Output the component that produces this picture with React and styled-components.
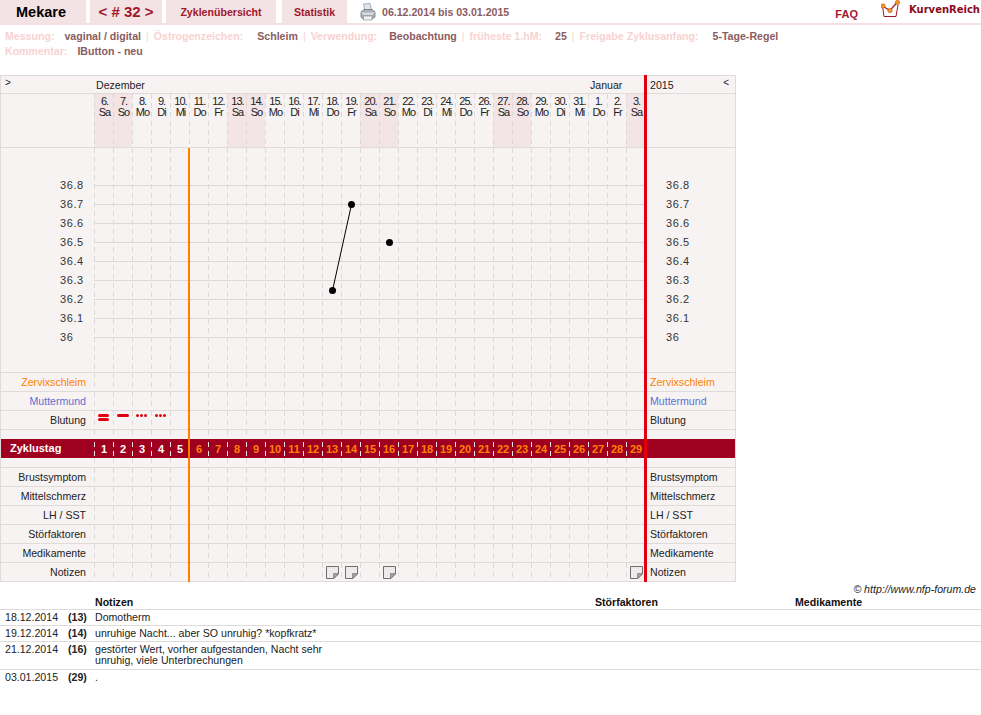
import React from "react";
import styled, { createGlobalStyle, css } from "styled-components";

const GlobalStyle = createGlobalStyle`
  html, body {
    margin: 0;
    padding: 0;
    background: #fff;
    font-family: "Liberation Sans", Arial, sans-serif;
    font-size: 10.6px;
    color: #222;
  }
`;

const TopBar = styled.div`
  display: flex;
  align-items: stretch;
  height: 23px;
  border-bottom: 2px solid #f3e0e3;
`;

const Tab = styled.div`
  display: flex;
  align-items: center;
  justify-content: center;
  width: ${({ $width }) => $width}px;
  margin-right: ${({ $gap }) => $gap}px;
  background: #f3e3e5;
  color: #a0182c;
  font-weight: bold;
`;

const TitleTab = styled(Tab)`
  box-sizing: border-box;
  padding-right: 4px;
  color: #000;
  font-size: 14.5px;
`;

const CycleTab = styled(Tab)`
  font-size: 15px;
`;

const PrintBox = styled.div`
  display: flex;
  align-items: center;
  gap: 6px;
  margin-left: 13px;
  color: #8a5c62;
  font-weight: bold;
`;

const Faq = styled.a`
  margin-left: auto;
  align-self: flex-end;
  margin-right: 23px;
  margin-bottom: 2px;
  color: #a0182c;
  font-size: 11px;
  font-weight: bold;
  line-height: 13px;
`;

const Logo = styled.div`
  display: flex;
  align-items: flex-start;
  gap: 8px;
  margin-right: 1px;
  color: #8c0a20;
  font-family: "DejaVu Sans", sans-serif;
  font-size: 10px;
  font-weight: bold;
  line-height: 20px;
`;

const Info = styled.div`
  box-sizing: border-box;
  height: 50px;
  padding: 4px 0 0 5px;
  font-weight: bold;
  line-height: 15px;
`;

const InfoLine = styled.div`
  display: flex;
  white-space: nowrap;
`;

const InfoLabel = styled.span`
  color: #f8d2d2;
  margin-right: ${({ $gap }) => $gap}px;
`;

const InfoValue = styled.span`
  color: #8a5c62;
`;

const InfoSep = styled.span`
  color: #f8d2d2;
  font-weight: normal;
  margin: 0 5px;
`;

const Chart = styled.div`
  position: relative;
  box-sizing: border-box;
  width: 736px;
  background: #f8f3f3;
  border: 1px solid #dfdbdb;
  border-bottom: none;
`;

const OrangeLine = styled.div`
  position: absolute;
  top: 72px;
  bottom: 0;
  left: 187px;
  width: 2px;
  background: #ff8000;
`;

const RedLine = styled.div`
  position: absolute;
  top: -1px;
  bottom: 0;
  left: 643px;
  width: 3px;
  background: #e2000f;
`;

const Row = styled.div`
  display: grid;
  grid-template-columns: 93px repeat(29, 19px) 1fr;
  height: ${({ $height }) => $height || 19}px;
  box-sizing: border-box;
  border-bottom: ${({ $plain }) => ($plain ? "none" : "1px solid #dfdbdb")};
`;

const MonthRow = styled(Row)`
  line-height: 18px;
`;

const Toggle = styled.span`
  padding-left: 4px;
  font-size: 10px;
  line-height: 14px;
`;

const Month = styled.div`
  grid-column: span ${({ $span }) => $span};
  padding-left: 2px;
`;

const YearCell = styled.div`
  display: flex;
  justify-content: space-between;
  padding: 0 6px 0 5px;
`;

const dashes = css`
  background-image: repeating-linear-gradient(
    to bottom,
    ${({ $dash }) => $dash || "#dcd9d9"} 0 5px,
    transparent 5px 9px
  );
  background-size: 1px 100%;
  background-repeat: no-repeat;
`;

const DayCell = styled.div`
  ${dashes}
  display: flex;
  align-items: center;
  justify-content: center;
  padding-left: 1px;
`;

const HeadCell = styled(DayCell)`
  flex-direction: column;
  justify-content: flex-start;
  padding: 2px 0 0 2px;
  background-color: ${({ $weekend }) => ($weekend ? "#f3e4e6" : "transparent")};
  font-size: 11px;
  line-height: 11px;
  letter-spacing: -1px;
`;

const MarkCell = styled(DayCell)`
  align-items: flex-start;
  padding: 3px 0 0;
`;

const RowLabel = styled.div`
  padding-right: 8px;
  text-align: right;
  line-height: 18px;
  color: ${({ $color }) => $color || "#222"};
`;

const RowEnd = styled.div`
  padding-left: 5px;
  line-height: 18px;
  color: ${({ $color }) => $color || "#222"};
`;

const Band = styled(Row)`
  background: #a00020;
  color: #fff;
  font-weight: bold;
`;

const BandLabel = styled.div`
  padding-left: 9px;
  font-size: 11px;
  line-height: 19px;
`;

const BandCell = styled(DayCell)`
  background-position: 0 3px;
  font-size: 11px;
  font-weight: bold;
  color: ${({ $early }) => ($early ? "#fff" : "#ff8000")};
`;

const Plot = styled.div`
  display: flex;
  height: 225px;
  box-sizing: border-box;
  border-bottom: 1px solid #dfdbdb;
`;

const Axis = styled.div`
  flex: ${({ $end }) => ($end ? "1" : "0 0 93px")};
  box-sizing: border-box;
  padding: 28px 0 0 ${({ $end }) => ($end ? 21 : 59)}px;
`;

const AxisValue = styled.div`
  height: 19px;
  font-size: 11px;
  letter-spacing: 0.6px;
  line-height: 19px;
  color: #333;
`;

const PlotArea = styled.svg`
  display: block;
  flex: 0 0 551px;
`;

const Copyright = styled.div`
  height: 13px;
  margin-top: 1px;
  padding-right: 5px;
  text-align: right;
  font-style: italic;
  line-height: 13px;
`;

const NoteRow = styled.div`
  display: grid;
  grid-template-columns: 63px 27px 500px 200px 1fr;
  padding: 2px 0 ${({ $tall }) => ($tall ? 3 : 2)}px 5px;
  border-bottom: 1px solid #dfdbdb;
  line-height: 11px;

  &:last-child {
    border-bottom: none;
  }
`;

const NoteHead = styled(NoteRow)`
  padding-top: 0;
  padding-bottom: 0;
  line-height: 13px;
  font-weight: bold;
  color: #111;
`;

const CycleDay = styled.span`
  font-weight: bold;
`;

const NoteText = styled.div`
  max-width: 240px;
`;

const dayNames = ["Sa", "So", "Mo", "Di", "Mi", "Do", "Fr"];
const dates = [...Array.from({ length: 26 }, (_, i) => i + 6), 1, 2, 3];
const days = dates.map((date, i) => ({
  date,
  name: dayNames[i % 7],
  weekend: i % 7 < 2,
  cycle: i + 1,
}));

const temps = ["36.8", "36.7", "36.6", "36.5", "36.4", "36.3", "36.2", "36.1", "36"];

const topRows = [
  { label: "Zervixschleim", color: "#ff8000" },
  { label: "Muttermund", color: "#5a70d2" },
];

const bottomRows = ["Brustsymptom", "Mittelschmerz", "LH / SST", "Störfaktoren", "Medikamente"];

const noteDays = [13, 14, 16, 29];

const notes = [
  { date: "18.12.2014", day: 13, text: "Domotherm" },
  { date: "19.12.2014", day: 14, text: "unruhige Nacht... aber SO unruhig? *kopfkratz*" },
  { date: "21.12.2014", day: 16, tall: true, text: "gestörter Wert, vorher aufgestanden, Nacht sehr unruhig, viele Unterbrechungen" },
  { date: "03.01.2015", day: 29, text: "." },
];

const bleeding = [3, 2, 1, 1];

const PrinterIcon = () => (
  <svg width="16" height="18" viewBox="0 0 16 18">
    <path d="M3.5 1 L10 0.5 L11.5 7 L5 8 Z" fill="#dfe6ee" stroke="#8d97a3" strokeWidth="0.8" />
    <path d="M1 9 L4 6.5 H12 L15 9 V14 L12 16 H3 L1 14 Z" fill="#aab0b8" stroke="#6f757d" strokeWidth="0.8" />
    <path d="M1 9.5 H15 L12 12 H3 Z" fill="#d8dcdf" />
    <path d="M3.5 13 H12 V17 H3.5 Z" fill="#eef0f2" stroke="#80868d" strokeWidth="0.6" />
  </svg>
);

const LogoIcon = () => (
  <svg width="20" height="18" viewBox="0 0 20 18">
    <path d="M1.5 6 L3 16.5 H15 L17 5" fill="#fff" stroke="#a0182c" strokeWidth="1" />
    <path d="M1.5 6 L9 10.5 L16 2.5" fill="none" stroke="#a0182c" strokeWidth="1.2" />
    <circle cx="2" cy="6" r="2.2" fill="#f59a1c" stroke="#b5401a" strokeWidth="0.5" />
    <circle cx="9" cy="10.5" r="2.2" fill="#f59a1c" stroke="#b5401a" strokeWidth="0.5" />
    <circle cx="16.5" cy="2.5" r="2.2" fill="#f59a1c" stroke="#b5401a" strokeWidth="0.5" />
  </svg>
);

const NoteIcon = () => (
  <svg width="13" height="13" viewBox="0 0 13 13">
    <path d="M0.5 0.5 H12.5 V8 L8 12.5 H0.5 Z" fill="#eceaea" stroke="#6e6e6e" />
    <path d="M12.5 7.5 H7.5 V12.5 Z" fill="#a0a0a0" stroke="#6e6e6e" strokeWidth="0.6" />
  </svg>
);

const BleedMark = ({ level }) => (
  <svg width="18" height="8" viewBox="0 0 18 8">
    {level === 3 && (
      <>
        <rect x="3" y="0" width="11" height="3" rx="1.5" fill="#e2000f" />
        <rect x="3" y="4" width="11" height="3" rx="1.5" fill="#e2000f" />
      </>
    )}
    {level === 2 && <rect x="3" y="0" width="12" height="3" rx="1.5" fill="#e2000f" />}
    {level === 1 &&
      [4, 8, 12].map((x) => <circle key={x} cx={x + 0.5} cy="1.5" r="1.5" fill="#e2000f" />)}
  </svg>
);

const Curve = () => (
  <PlotArea width="551" height="224" viewBox="0 0 551 224">
    {days.map((d, i) => (
      <line key={d.cycle} x1={i * 19 + 0.5} x2={i * 19 + 0.5} y1="0" y2="224" stroke="#dcd9d9" strokeDasharray="5 4" />
    ))}
    {temps.map((t, i) => (
      <line key={t} x1="0" x2="551" y1={37.5 + i * 19} y2={37.5 + i * 19} stroke="#dcd9d9" />
    ))}
    <line x1="238.5" y1="142.5" x2="257.5" y2="56.5" stroke="#000" />
    <circle cx="238.5" cy="142.5" r="3.5" fill="#000" />
    <circle cx="257.5" cy="56.5" r="3.5" fill="#000" />
    <circle cx="295.5" cy="94.5" r="3.5" fill="#000" />
  </PlotArea>
);

const EmptyCells = () => days.map((d) => <DayCell key={d.cycle} />);

const App = () => (
  <>
    <GlobalStyle />
    <TopBar>
      <TitleTab $width={86} $gap={4}>Mekare</TitleTab>
      <CycleTab $width={72} $gap={4}>&lt; # 32 &gt;</CycleTab>
      <Tab $width={110} $gap={6}>Zyklenübersicht</Tab>
      <Tab $width={65} $gap={0}>Statistik</Tab>
      <PrintBox>
        <PrinterIcon />
        <span>06.12.2014 bis 03.01.2015</span>
      </PrintBox>
      <Faq>FAQ</Faq>
      <Logo>
        <LogoIcon />
        <span>KurvenReich</span>
      </Logo>
    </TopBar>

    <Info>
      <InfoLine>
        <InfoLabel $gap={10}>Messung:</InfoLabel>
        <InfoValue>vaginal / digital</InfoValue>
        <InfoSep>|</InfoSep>
        <InfoLabel $gap={14}>Östrogenzeichen:</InfoLabel>
        <InfoValue>Schleim</InfoValue>
        <InfoSep>|</InfoSep>
        <InfoLabel $gap={12}>Verwendung:</InfoLabel>
        <InfoValue>Beobachtung</InfoValue>
        <InfoSep>|</InfoSep>
        <InfoLabel $gap={13}>früheste 1.hM:</InfoLabel>
        <InfoValue>25</InfoValue>
        <InfoSep>|</InfoSep>
        <InfoLabel $gap={14}>Freigabe Zyklusanfang:</InfoLabel>
        <InfoValue>5-Tage-Regel</InfoValue>
      </InfoLine>
      <InfoLine>
        <InfoLabel $gap={10}>Kommentar:</InfoLabel>
        <InfoValue>IButton - neu</InfoValue>
      </InfoLine>
    </Info>

    <Chart>
      <MonthRow $height={18}>
        <Toggle>&gt;</Toggle>
        <Month $span={26}>Dezember</Month>
        <Month $span={3}>Januar</Month>
        <YearCell>
          <span>2015</span>
          <Toggle>&lt;</Toggle>
        </YearCell>
      </MonthRow>

      <Row $height={54}>
        <div />
        {days.map((d) => (
          <HeadCell key={d.cycle} $weekend={d.weekend}>
            <span>{d.date}.</span>
            <span>{d.name}</span>
          </HeadCell>
        ))}
        <div />
      </Row>

      <Plot>
        <Axis>
          {temps.map((t) => <AxisValue key={t}>{t}</AxisValue>)}
        </Axis>
        <Curve />
        <Axis $end>
          {temps.map((t) => <AxisValue key={t}>{t}</AxisValue>)}
        </Axis>
      </Plot>

      {topRows.map((r) => (
        <Row key={r.label}>
          <RowLabel $color={r.color}>{r.label}</RowLabel>
          <EmptyCells />
          <RowEnd $color={r.color}>{r.label}</RowEnd>
        </Row>
      ))}

      <Row>
        <RowLabel>Blutung</RowLabel>
        {days.map((d, i) => (
          <MarkCell key={d.cycle}>
            {bleeding[i] && <BleedMark level={bleeding[i]} />}
          </MarkCell>
        ))}
        <RowEnd>Blutung</RowEnd>
      </Row>

      <Row $height={9} $plain>
        <div />
        <EmptyCells />
        <div />
      </Row>

      <Band $plain>
        <BandLabel>Zyklustag</BandLabel>
        {days.map((d) => (
          <BandCell key={d.cycle} $dash="#f4e6e6" $early={d.cycle < 6}>{d.cycle}</BandCell>
        ))}
        <div />
      </Band>

      <Row $height={10}>
        <div />
        <EmptyCells />
        <div />
      </Row>

      {bottomRows.map((label) => (
        <Row key={label}>
          <RowLabel>{label}</RowLabel>
          <EmptyCells />
          <RowEnd>{label}</RowEnd>
        </Row>
      ))}

      <Row>
        <RowLabel>Notizen</RowLabel>
        {days.map((d) => (
          <DayCell key={d.cycle}>
            {noteDays.includes(d.cycle) && <NoteIcon />}
          </DayCell>
        ))}
        <RowEnd>Notizen</RowEnd>
      </Row>

      <OrangeLine />
      <RedLine />
    </Chart>

    <Copyright>© http://www.nfp-forum.de</Copyright>

    <NoteHead>
      <span />
      <span />
      <span>Notizen</span>
      <span>Störfaktoren</span>
      <span>Medikamente</span>
    </NoteHead>
    {notes.map((n) => (
      <NoteRow key={n.date} $tall={n.tall}>
        <span>{n.date}</span>
        <CycleDay>({n.day})</CycleDay>
        <NoteText>{n.text}</NoteText>
        <span />
        <span />
      </NoteRow>
    ))}
  </>
);

export default App;
